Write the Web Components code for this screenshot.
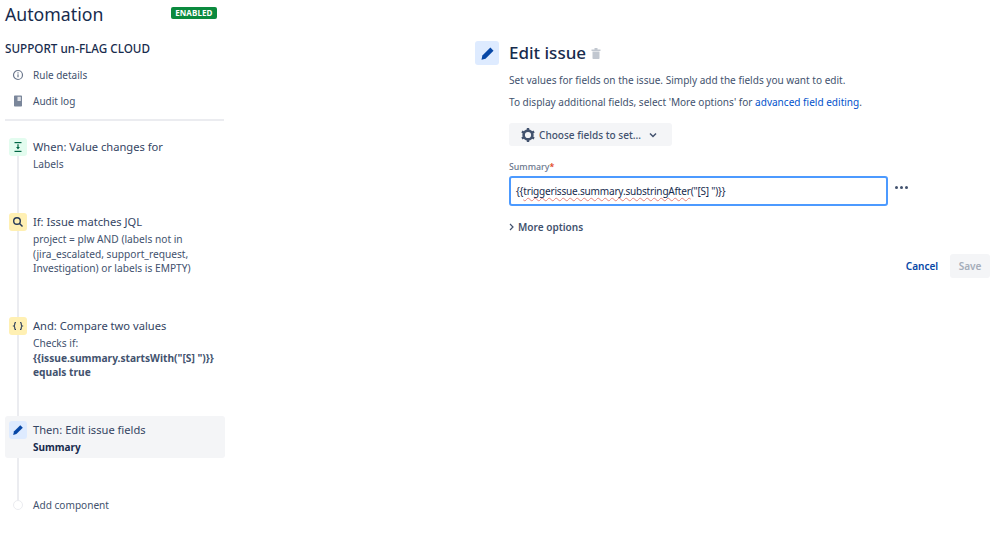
<!DOCTYPE html>
<html lang="en">
<head>
<meta charset="utf-8">
<title>Automation</title>
<style>
  html, body { margin: 0; background: #fff; }
  body { font-family: "Noto Sans", "Open Sans", sans-serif; color: #172b4d; }
</style>
</head>
<body>
<rule-page>
  <rule-sidebar slot="side">
    <side-link slot="links" icon="info">Rule details</side-link>
    <side-link slot="links" icon="log">Audit log</side-link>
    <rule-step slot="steps" icon="when" tone="green" title-text="When: Value changes for" space="75"><span>Labels</span></rule-step>
    <rule-step slot="steps" icon="search" tone="yellow" title-text="If: Issue matches JQL" space="104"><span>project = plw AND (labels not in (jira_escalated, support_request, Investigation) or labels is EMPTY)</span></rule-step>
    <rule-step slot="steps" icon="braces" tone="yellow" title-text="And: Compare two values" space="99"><span>Checks if:<br><b>{{issue.summary.startsWith("[S] ")}} equals true</b></span></rule-step>
    <rule-step slot="steps" icon="pencil" tone="blue" title-text="Then: Edit issue fields" space="80" selected><b>Summary</b></rule-step>
    <add-step slot="steps"></add-step>
  </rule-sidebar>
  <edit-panel slot="main"></edit-panel>
</rule-page>

<script>
  // shared svg icons
  const ICONS = {
    info: `<svg width="12" height="12" viewBox="0 0 12 12"><circle cx="6" cy="6" r="4.500" fill="none" stroke="#6b778c" stroke-width="1.200"/><rect x="5.400" y="5.300" width="1.200" height="3" fill="#6b778c"/><rect x="5.400" y="3.300" width="1.200" height="1.200" fill="#6b778c"/></svg>`,
    log: `<svg width="12" height="12" viewBox="0 0 12 12"><path d="M2.800 0.500h6.400a.8.8 0 0 1 .8.8v9.400a.8.8 0 0 1-.8.8H2.800a.8.8 0 0 1-.8-.8V1.300a.8.8 0 0 1 .8-.8z" fill="#7a869a"/><rect x="5.500" y="1.800" width="3.300" height="4.200" fill="#dfe1e6"/></svg>`,
    when: `<svg width="12" height="12" viewBox="0 0 12 12" fill="#006644"><rect x="2.500" y="1" width="7" height="1.200"/><rect x="2.500" y="9.800" width="7" height="1.200"/><path d="M5.400 3.200h1.200v2.800h1.300L6 8.400 4.100 6h1.300z"/></svg>`,
    search: `<svg width="12" height="12" viewBox="0 0 12 12" fill="none" stroke="#253858" stroke-width="1.400"><circle cx="5" cy="5" r="3.300"/><path d="M7.500 7.500l3 3"/></svg>`,
    braces: `<svg width="12" height="12" viewBox="0 0 12 12" fill="none" stroke="#253858" stroke-width="1.100"><path d="M4 2.500c-1.300 0-1.200.7-1.200 1.500s-.3 1.700-1 2c.7.300 1 1.200 1 2s-.1 1.500 1.200 1.500"/><path d="M8 2.500c1.300 0 1.200.7 1.200 1.500s.3 1.700 1 2c-.7.300-1 1.200-1 2s.1 1.500-1.200 1.500"/></svg>`,
    pencil: `<svg width="12" height="12" viewBox="0 0 12 12" fill="#0747a6"><path d="M8.300 1.200l2.500 2.500-6.400 6.400-3.200.8.700-3.300z"/></svg>`
  };

  class RulePage extends HTMLElement {
    constructor() {
      super();
      this.attachShadow({ mode: "open" });
      this.shadowRoot.innerHTML = `
        <style>
          :host { display: grid; grid-template-columns: 225px 1fr; width: 999px; height: 533px; overflow: hidden; }
        </style>
        <slot name="side"></slot>
        <slot name="main"></slot>
      `;
    }
  }

  class RuleSidebar extends HTMLElement {
    constructor() {
      super();
      this.attachShadow({ mode: "open" });
      this.shadowRoot.innerHTML = `
        <style>
          :host { display: block; padding: 0 0 0 5px; }
          header { display: flex; justify-content: space-between; align-items: flex-start; height: 41px; padding-top: 2px; box-sizing: border-box; }
          h1 { margin: 0; font-size: 17.700px; font-weight: 400; line-height: 24px; }
          .badge { margin: 5px 8px 0 0; background: #0b8a3e; color: #fff; font-size: 8px; font-weight: 700; line-height: 12px; padding: 0 4.500px; border-radius: 2px; letter-spacing: .1px; }
          h2 { margin: 0; font-size: 11.700px; font-weight: 500; line-height: 14px; height: 21px; }
          .links { display: flex; flex-direction: column; padding-bottom: 5px; border-bottom: 2px solid #ebecf0; margin-right: 1px; }
          .steps { position: relative; display: flex; flex-direction: column; margin-top: 17px; }
          .steps::before { content: ""; position: absolute; left: 12px; top: 12px; height: 351px; width: 2px; background: #ebecf0; }
        </style>
        <header><h1>Automation</h1><span class="badge">ENABLED</span></header>
        <h2>SUPPORT un-FLAG CLOUD</h2>
        <div class="links"><slot name="links"></slot></div>
        <div class="steps"><slot name="steps"></slot></div>
      `;
    }
  }

  class SideLink extends HTMLElement {
    constructor() {
      super();
      this.attachShadow({ mode: "open" });
    }
    connectedCallback() {
      this.shadowRoot.innerHTML = `
        <style>
          :host { display: flex; align-items: center; height: 26px; font-size: 10px; color: #42526e; }
          .ic { display: flex; width: 12px; margin: 0 9px 0 7px; }
        </style>
        <span class="ic">${ICONS[this.getAttribute("icon")]}</span><slot></slot>
      `;
    }
  }

  class RuleStep extends HTMLElement {
    constructor() {
      super();
      this.attachShadow({ mode: "open" });
    }
    connectedCallback() {
      const tones = { green: "#e3fcef", yellow: "#fff0b3", blue: "#deebff" };
      const tone = tones[this.getAttribute("tone")];
      const selected = this.hasAttribute("selected");
      this.shadowRoot.innerHTML = `
        <style>
          :host { display: block; position: relative; height: ${this.getAttribute("space")}px; }
          .row { display: flex; gap: 6px; padding: ${selected ? "5px 4px 3px" : "0 4px"}; border-radius: 3px; background: ${selected ? "#f4f5f7" : "transparent"}; }
          .ic { flex: none; width: 18px; height: 18px; border-radius: 3px; background: ${tone}; display: flex; align-items: center; justify-content: center; }
          .t { font-size: 11.150px; line-height: 18px; color: #344563; }
          .d { font-size: 10.200px; line-height: 14.600px; color: #42526e; margin-top: 1px; }
          ::slotted(b) { color: #172b4d; font-size: 10px; }
        </style>
        <div class="row">
          <span class="ic">${ICONS[this.getAttribute("icon")]}</span>
          <div><div class="t">${this.getAttribute("title-text")}</div><div class="d"><slot></slot></div></div>
        </div>
      `;
    }
  }

  class AddStep extends HTMLElement {
    constructor() {
      super();
      this.attachShadow({ mode: "open" });
      this.shadowRoot.innerHTML = `
        <style>
          :host { display: flex; position: relative; align-items: center; height: 18px; font-size: 10.100px; color: #42526e; }
          i { box-sizing: border-box; width: 10px; height: 10px; margin: 0 10px 0 8px; border: 1.500px solid #ebecf0; border-radius: 50%; background: #fff; }
        </style>
        <i></i><span>Add component</span>
      `;
    }
  }

  class EditPanel extends HTMLElement {
    constructor() {
      super();
      this.attachShadow({ mode: "open" });
      this.shadowRoot.innerHTML = `
        <style>
          :host { display: block; padding: 41px 8px 0 250px; font-size: 10.050px; color: #42526e; }
          .head { display: flex; align-items: center; gap: 10px; height: 24px; }
          .pen { width: 24px; height: 24px; border-radius: 3px; background: #deebff; display: flex; align-items: center; justify-content: center; }
          .pen svg { width: 15px; height: 15px; }
          h3 { margin: 0; font-size: 17px; font-weight: 500; color: #172b4d; line-height: 24px; }
          .body { padding-left: 34px; }
          p { margin: 0; line-height: 14px; }
          p.a { margin-top: 8px; }
          p.b { margin-top: 8px; }
          a { color: #0052cc; text-decoration: none; }
          .choose { display: flex; width: max-content; align-items: center; margin-top: 14px; height: 23px; padding: 0 14px 0 11px; gap: 3px; background: #f4f5f7; border-radius: 3px; font-weight: 500; color: #42526e; }
          .label { margin-top: 15px; font-size: 8.800px; font-weight: 500; color: #6b778c; line-height: 12px; }
          .label em { color: #de350b; font-style: normal; }
          .fieldrow { display: flex; align-items: center; margin-top: 3px; gap: 7px; }
          .field { width: 379px; height: 30px; box-sizing: border-box; border: 2px solid #4c9aff; border-radius: 3px; padding: 0 5px; display: flex; align-items: center; color: #172b4d; letter-spacing: -.2px; }
          .field u { text-decoration: underline wavy #e8837a 1px; text-underline-offset: 2px; }
          .dots { display: flex; gap: 2px; margin-bottom: 7px; }
          .dots i { width: 3px; height: 3px; border-radius: 50%; background: #42526e; }
          .more { display: flex; align-items: center; margin-top: 14px; gap: 4px; font-weight: 600; color: #42526e; height: 14px; }
          .actions { display: flex; justify-content: flex-end; align-items: center; gap: 12px; margin-top: 20px; width: 481px; font-weight: 600; }
          .cancel { color: #0747a6; }
          .save { height: 24px; padding: 0 8.500px; display: flex; align-items: center; background: #f4f5f7; color: #a5adba; border-radius: 3px; }
        </style>
        <div class="head">
          <span class="pen">${ICONS.pencil}</span>
          <h3>Edit issue</h3>
          <svg width="10" height="11" viewBox="0 0 10 11" fill="#c1c7d0" style="margin-left:-5px"><rect x="3.500" y="0" width="3" height="2"/><rect x="0.500" y="1.500" width="9" height="1.500"/><path d="M1.500 3.500h7v6.700a.8.8 0 0 1-.8.8H2.300a.8.8 0 0 1-.8-.8z"/></svg>
        </div>
        <div class="body">
          <p class="a">Set values for fields on the issue. Simply add the fields you want to edit.</p>
          <p class="b">To display additional fields, select 'More options' for <a>advanced field editing</a>.</p>
          <div class="choose">
            <svg width="16" height="16" viewBox="0 0 16 16"><circle cx="8" cy="8" r="4.400" fill="none" stroke="#42526e" stroke-width="2.600"/><g stroke="#42526e" stroke-width="2.400"><path d="M8 1v3M8 12v3M1.900 4.500l2.600 1.500M11.500 10l2.600 1.500M1.900 11.500L4.500 10M11.500 6l2.600-1.500"/></g></svg>
            <span>Choose fields to set...</span>
            <svg width="10" height="10" viewBox="0 0 10 10" fill="none" stroke="#42526e" stroke-width="1.500" style="margin-left:4px"><path d="M2 3.500l3 3 3-3"/></svg>
          </div>
          <div class="label">Summary<em>*</em></div>
          <div class="fieldrow">
            <div class="field"><span>{{<u>triggerissue.summary.substringAfter</u>("[S] ")}}</span></div>
            <span class="dots"><i></i><i></i><i></i></span>
          </div>
          <div class="more">
            <svg width="5" height="8" viewBox="0 0 5 8" fill="none" stroke="#42526e" stroke-width="1.200"><path d="M1 1l3 3-3 3"/></svg>
            <span>More options</span>
          </div>
          <div class="actions"><span class="cancel">Cancel</span><span class="save">Save</span></div>
        </div>
      `;
    }
  }

  customElements.define("rule-page", RulePage);
  customElements.define("rule-sidebar", RuleSidebar);
  customElements.define("side-link", SideLink);
  customElements.define("rule-step", RuleStep);
  customElements.define("add-step", AddStep);
  customElements.define("edit-panel", EditPanel);
</script>
</body>
</html>
